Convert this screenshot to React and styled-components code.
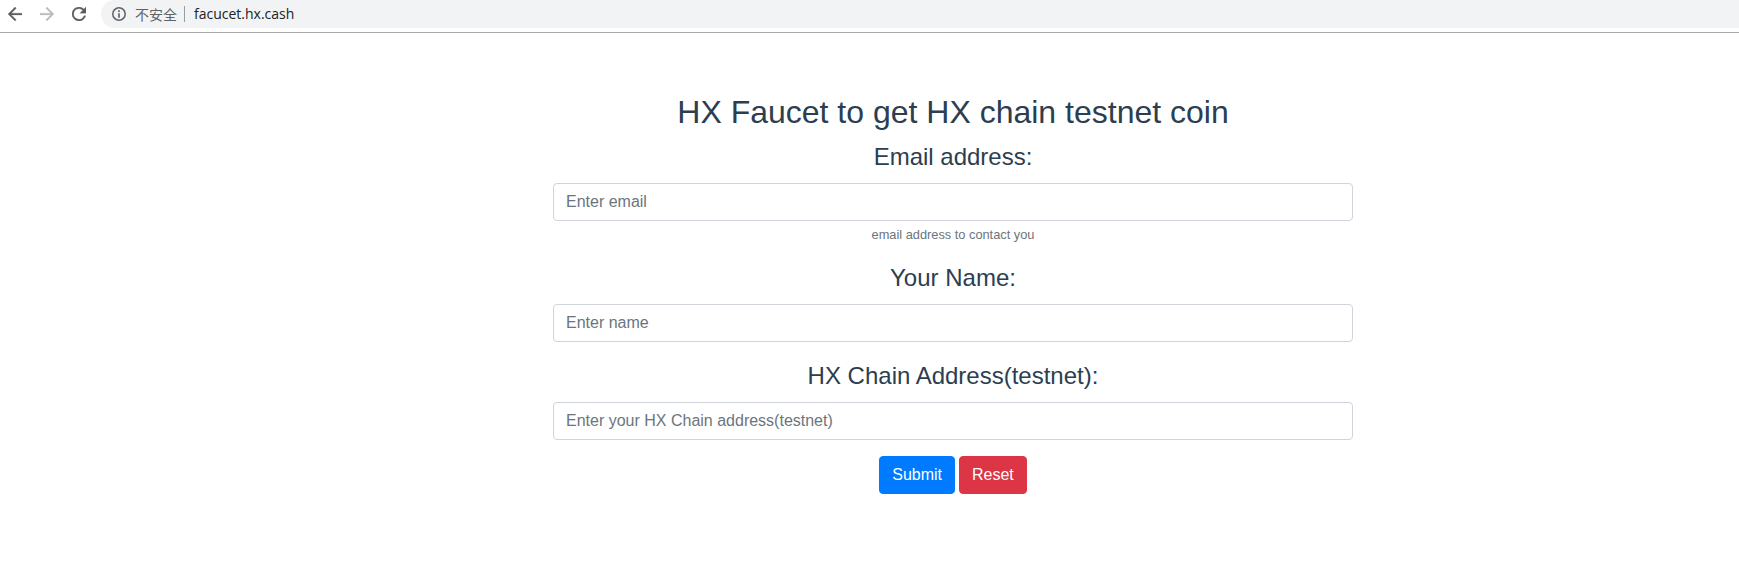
import React from 'react';
import styled, { createGlobalStyle } from 'styled-components';

const GlobalStyle = createGlobalStyle`
  * { box-sizing: border-box; }
  body { margin: 0; background: #fff; overflow: hidden; }
`;

const BrowserBar = styled.header`
  display: flex;
  align-items: center;
  height: 33px;
  padding-bottom: 4px;
  border-bottom: 1px solid #a9a9a9;
  background: #fff;
`;

const NavIcons = styled.div`
  display: flex;
  gap: 18px;
  padding: 0 15px 0 8px;
`;

const NavIcon = styled.svg`
  display: block;
  width: 14px;
  height: 14px;
  fill: ${({ $muted }) => ($muted ? '#babcbe' : '#5a5d61')};
  stroke: ${({ $muted }) => ($muted ? '#babcbe' : '#5a5d61')};
  stroke-width: 0.3;
`;

const AddressBar = styled.div`
  display: flex;
  flex: 1;
  align-items: center;
  height: 28px;
  padding-left: 11px;
  border-radius: 14px 0 0 14px;
  background: #f1f3f4;
  font: 14px/20px "Open Sans", "Noto Sans CJK SC", sans-serif;
  color: #202124;
`;

const InfoIcon = styled.svg`
  width: 14px;
  height: 14px;
  fill: #5f6368;
`;

const Security = styled.span`
  margin-left: 9px;
  padding-right: 7px;
  border-right: 1px solid #9a9da0;
  line-height: 16px;
  color: #5f6368;
  font-family: "Noto Sans CJK SC", sans-serif;
`;

const Url = styled.span`
  margin-left: 9px;
`;

const Page = styled.main`
  display: flex;
  flex-direction: column;
  width: 800px;
  margin: 60px 0 0 553px;
  font-family: "Liberation Sans", Arial, sans-serif;
  line-height: 1.5;
  text-align: center;
  color: #2c3e50;
`;

const Title = styled.h2`
  margin: 0 0 8px;
  font-size: 32px;
  font-weight: 500;
  line-height: 38.4px;
`;

const Field = styled.div`
  margin-bottom: 16px;
`;

const Label = styled.label`
  display: block;
  margin-bottom: 8px;
  font-size: 24px;
  line-height: 36px;
`;

const Input = styled.input`
  display: block;
  width: 100%;
  height: 38px;
  padding: 6px 12px;
  border: 1px solid #ced4da;
  border-radius: 4px;
  font: 16px/24px "Liberation Sans", Arial, sans-serif;
  &::placeholder { color: #6c757d; opacity: 1; }
`;

const Help = styled.small`
  display: block;
  margin-top: 4px;
  font-size: 12.8px;
  line-height: 19px;
  color: #6c757d;
`;

const Actions = styled.div`
  display: flex;
  justify-content: center;
  gap: 4px;
`;

const Button = styled.button`
  height: 38px;
  padding: 6px 12px;
  border: 1px solid ${({ $color }) => $color};
  border-radius: 4px;
  background: ${({ $color }) => $color};
  color: #fff;
  font: 16px/24px "Liberation Sans", Arial, sans-serif;
`;

export default function App() {
  return (
    <>
      <GlobalStyle />
      <BrowserBar>
        <NavIcons>
          <NavIcon viewBox="4 4 16 16"><path d="M20 11H7.83l5.59-5.59L12 4l-8 8 8 8 1.41-1.41L7.83 13H20v-2z" /></NavIcon>
          <NavIcon $muted viewBox="4 4 16 16"><path d="M12 4l-1.41 1.41L16.17 11H4v2h12.17l-5.58 5.59L12 20l8-8z" /></NavIcon>
          <NavIcon viewBox="4 4 16 16"><path d="M17.65 6.35A7.96 7.96 0 0 0 12 4a8 8 0 1 0 7.73 10h-2.08A6 6 0 1 1 12 6c1.66 0 3.14.69 4.22 1.78L13 11h7V4l-2.35 2.35z" /></NavIcon>
        </NavIcons>
        <AddressBar>
          <InfoIcon viewBox="2 2 20 20"><path d="M10.8 17.2h2.4v-6.4h-2.4v6.4zM12 2a10 10 0 1 0 0 20 10 10 0 0 0 0-20zm0 17.8a7.8 7.8 0 1 1 0-15.6 7.8 7.8 0 0 1 0 15.6zM10.8 9.2h2.4V6.8h-2.4v2.4z" /></InfoIcon>
          <Security>不安全</Security>
          <Url>facucet.hx.cash</Url>
        </AddressBar>
      </BrowserBar>
      <Page>
        <Title>HX Faucet to get HX chain testnet coin</Title>
        <Field>
          <Label htmlFor="email">Email address:</Label>
          <Input id="email" placeholder="Enter email" />
          <Help>email address to contact you</Help>
        </Field>
        <Field>
          <Label htmlFor="name">Your Name:</Label>
          <Input id="name" placeholder="Enter name" />
        </Field>
        <Field>
          <Label htmlFor="address">HX Chain Address(testnet):</Label>
          <Input id="address" placeholder="Enter your HX Chain address(testnet)" />
        </Field>
        <Actions>
          <Button $color="#007bff">Submit</Button>
          <Button $color="#dc3545">Reset</Button>
        </Actions>
      </Page>
    </>
  );
}
